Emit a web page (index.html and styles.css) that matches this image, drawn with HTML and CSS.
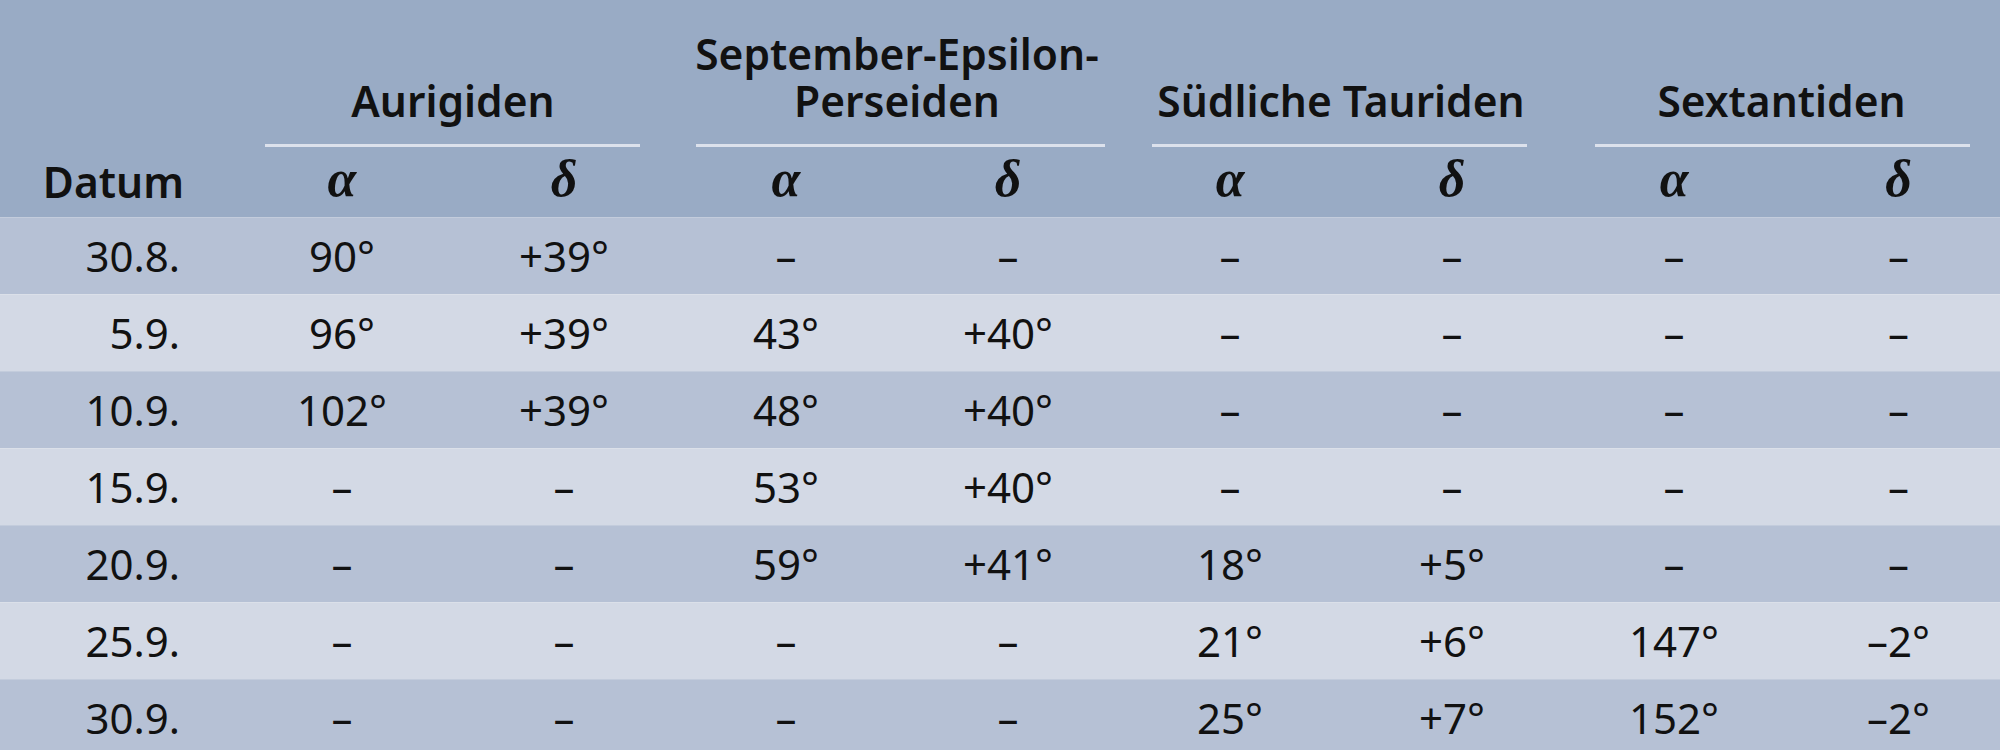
FILE: index.html
```html
<!DOCTYPE html>
<html lang="de">
<head>
<meta charset="utf-8">
<title>Radianten</title>
<link rel="stylesheet" href="styles.css">
</head>
<body>
<table class="tbl">
  <colgroup>
    <col class="c-date">
    <col class="c-data"><col class="c-data">
    <col class="c-data"><col class="c-data">
    <col class="c-data"><col class="c-data">
    <col class="c-data"><col class="c-last">
  </colgroup>
  <thead>
    <tr class="h1">
      <th class="date-h" rowspan="2">Datum</th>
      <th class="grp" colspan="2"><div class="gt">Aurigiden</div><div class="rule r-aur"></div></th>
      <th class="grp" colspan="2"><div class="gt"><div class="gl">September-Epsilon-</div><div class="gl">Perseiden</div></div><div class="rule r-sep"></div></th>
      <th class="grp" colspan="2"><div class="gt">Südliche Tauriden</div><div class="rule r-sue"></div></th>
      <th class="grp" colspan="2"><div class="gt">Sextantiden</div><div class="rule r-sex"></div></th>
    </tr>
    <tr class="h2">
      <th class="gr">α</th><th class="gr">δ</th>
      <th class="gr">α</th><th class="gr">δ</th>
      <th class="gr">α</th><th class="gr">δ</th>
      <th class="gr">α</th><th class="gr last">δ</th>
    </tr>
  </thead>
  <tbody>
    <tr class="dark"><td class="d">30.8.</td><td>90°</td><td>+39°</td><td>–</td><td>–</td><td>–</td><td>–</td><td>–</td><td class="last">–</td></tr>
    <tr class="light"><td class="d">5.9.</td><td>96°</td><td>+39°</td><td>43°</td><td>+40°</td><td>–</td><td>–</td><td>–</td><td class="last">–</td></tr>
    <tr class="dark"><td class="d">10.9.</td><td>102°</td><td>+39°</td><td>48°</td><td>+40°</td><td>–</td><td>–</td><td>–</td><td class="last">–</td></tr>
    <tr class="light"><td class="d">15.9.</td><td>–</td><td>–</td><td>53°</td><td>+40°</td><td>–</td><td>–</td><td>–</td><td class="last">–</td></tr>
    <tr class="dark"><td class="d">20.9.</td><td>–</td><td>–</td><td>59°</td><td>+41°</td><td>18°</td><td>+5°</td><td>–</td><td class="last">–</td></tr>
    <tr class="light"><td class="d">25.9.</td><td>–</td><td>–</td><td>–</td><td>–</td><td>21°</td><td>+6°</td><td>147°</td><td class="last">–2°</td></tr>
    <tr class="dark"><td class="d">30.9.</td><td>–</td><td>–</td><td>–</td><td>–</td><td>25°</td><td>+7°</td><td>152°</td><td class="last">–2°</td></tr>
  </tbody>
</table>
</body>
</html>
```
FILE: styles.css
```css
html, body {
  margin: 0;
  padding: 0;
  background: #b6c1d5;
  overflow: hidden;
}
body {
  width: 2000px;
  height: 750px;
  font-family: "Noto Sans", "Open Sans", sans-serif;
  color: #111;
}
.tbl {
  width: 2000px;
  table-layout: fixed;
  border-collapse: collapse;
  border-spacing: 0;
}
.c-date { width: 231px; }
.c-data { width: 222px; }
.c-last { width: 215px; }

thead { background: #99abc5; }
th, td { padding: 0; }

.h1 { height: 147px; }
.h2 { height: 70px; }

.date-h {
  vertical-align: bottom;
  text-align: right;
  padding-right: 47px;
  font-size: 42.5px;
  font-weight: 600;
  line-height: 70px;
}
.grp {
  vertical-align: bottom;
  text-align: center;
  font-size: 42.5px;
  font-weight: 600;
}
.gt {
  line-height: 47px;
  margin-bottom: 20px;
  white-space: nowrap;
}
.gl {
  height: 47px;
  line-height: 47px;
}
.rule {
  height: 3px;
  background: #dce1ec;
}
.r-aur { margin: 0 35px 0 34px; }
.r-sep { margin: 0 14px 0 21px; }
.r-sue { margin: 0 36px 0 33px; }
.r-sex { margin: 0 30px 0 32px; }

.gr {
  vertical-align: top;
  text-align: center;
  font-family: "Liberation Serif", "DejaVu Serif", serif;
  font-style: italic;
  font-weight: 700;
  font-size: 52px;
  line-height: 64px;
}
.gr.last { padding-left: 12px; }

tbody tr { height: 76.7px; }
tbody td {
  vertical-align: top;
  text-align: center;
  font-size: 42px;
  font-weight: 400;
  line-height: 76px;
  border-top: 1px solid rgba(255, 255, 255, 0.18);
  white-space: nowrap;
}
tbody td.d {
  text-align: right;
  padding-right: 51px;
}
tbody td.last { padding-left: 12px; }
.dark { background: #b6c1d5; }
.light { background: #d3d9e5; }
```
